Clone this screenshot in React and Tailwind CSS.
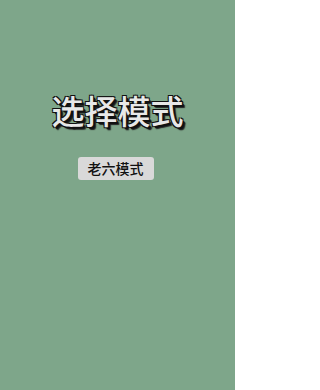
export default function App() {
  return (
    <div className="w-[235px] h-[390px] bg-[#7ea68a] flex flex-col items-center pt-[90px] font-['Noto_Sans_CJK_SC','Noto_Sans',sans-serif]">
      <h1 className="text-[33px] leading-[40px] font-medium text-[#e8e8e8] [text-shadow:-1px_-1px_0_#111,1px_-1px_0_#111,-1px_1px_0_#111,1px_1px_0_#111,2px_2px_0_#111,3px_3px_1px_#222]">
        选择模式
      </h1>
      <button className="mt-[27px] -translate-x-[2px] h-[23px] px-[10px] rounded-[3px] bg-[#d9d9d9] text-[#111] text-[14px] leading-[23px] font-medium">
        老六模式
      </button>
    </div>
  );
}
